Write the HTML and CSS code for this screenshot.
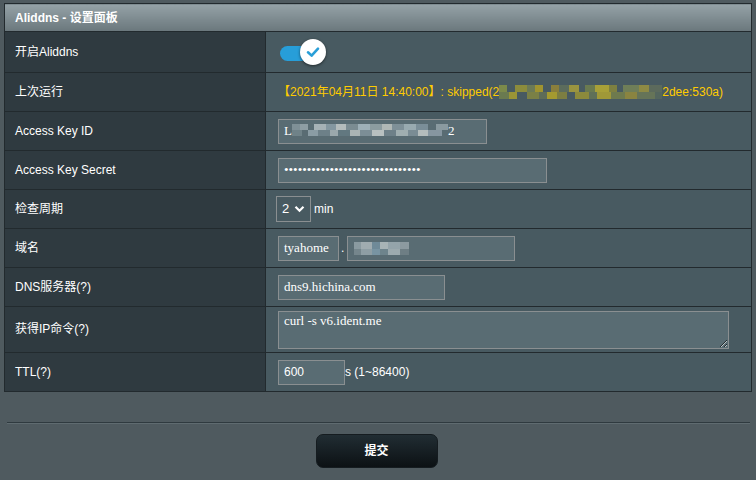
FILE: index.html
```html
<!DOCTYPE html>
<html>
<head>
<meta charset="utf-8">
<link rel="stylesheet" href="styles.css">
</head>
<body>
<div class="page">
  <table class="panel">
    <thead>
      <tr><th colspan="2" class="head">Aliddns - 设置面板</th></tr>
    </thead>
    <tbody>
      <tr class="r-first">
        <th>开启Aliddns</th>
        <td>
          <div class="toggle">
            <span class="track"></span>
            <span class="knob">
              <svg width="16" height="16" viewBox="0 0 16 16"><path d="M3 8.3 L6.6 11.6 L13 4.6" fill="none" stroke="#2a9fd8" stroke-width="2.6" stroke-linecap="round" stroke-linejoin="round"/></svg>
            </span>
          </div>
        </td>
      </tr>
      <tr>
        <th>上次运行</th>
        <td class="status">【2021年04月11日 14:40:00】: skipped(2<span class="mosaic mosaic-status"></span>2dee:530a)</td>
      </tr>
      <tr>
        <th>Access Key ID</th>
        <td><div class="field w-id">L<span class="mosaic mosaic-id"></span>2</div></td>
      </tr>
      <tr>
        <th>Access Key Secret</th>
        <td><input class="field w-secret" type="password" value="123456789012345678901234567890"></td>
      </tr>
      <tr>
        <th>检查周期</th>
        <td><div class="inline"><div class="select">2<svg width="11" height="8" viewBox="0 0 11 8"><path d="M1.5 1.8 L5.5 5.8 L9.5 1.8" fill="none" stroke="#fff" stroke-width="2.2"/></svg></div><span class="unit">min</span></div></td>
      </tr>
      <tr>
        <th>域名</th>
        <td><div class="inline"><div class="field w-sub">tyahome</div><span class="dot">.</span><div class="field w-dom"><span class="mosaic mosaic-dom"></span></div></div></td>
      </tr>
      <tr>
        <th>DNS服务器(?)</th>
        <td><div class="field w-dns">dns9.hichina.com</div></td>
      </tr>
      <tr class="r-tall">
        <th>获得IP命令(?)</th>
        <td><textarea class="area">curl -s v6.ident.me</textarea></td>
      </tr>
      <tr>
        <th>TTL(?)</th>
        <td><div class="inline"><div class="field w-ttl sans">600</div><span class="unit tight">s (1~86400)</span></div></td>
      </tr>
    </tbody>
  </table>
  <div class="divider"></div>
  <div class="actions"><button class="submit">提交</button></div>
</div>
</body>
</html>
```
FILE: styles.css
```css
html, body {
  margin: 0;
  padding: 0;
  background: #4f5a5f;
  font-family: "Liberation Sans", Arial, "Noto Sans CJK SC", sans-serif;
  font-size: 12px;
  line-height: 14px;
  color: #fff;
}
.page {
  padding: 3px 4px 0 4px;
}
.panel {
  width: 748px;
  border-collapse: collapse;
  border: 1px solid #222a2e;
}
.panel th, .panel td {
  border: 1px solid #222a2e;
  padding: 0;
  text-align: left;
  font-weight: normal;
}
.panel th.head {
  height: 27px;
  padding-left: 10px;
  font-weight: bold;
  background: linear-gradient(#95a2a7, #6a777c);
}
.panel tbody th {
  width: 250px;
  padding-left: 10px;
  padding-bottom: 1px;
  background: #2f3a40;
  height: 37px;
}
.panel tbody td {
  background: #485a61;
  padding-left: 12px;
  height: 38px;
}
.panel tr.r-first th { height: 39px; }
.panel tr.r-first td { height: 40px; }
.panel tr.r-tall th { height: 44px; }
.panel tr.r-tall td { height: 45px; }

.toggle {
  position: relative;
  width: 48px;
  height: 28px;
  margin-top: 1px;
}
.track {
  position: absolute;
  left: 2px;
  top: 7px;
  width: 34px;
  height: 15px;
  border-radius: 8px;
  background: #279ed9;
}
.knob {
  position: absolute;
  left: 22px;
  top: 0;
  width: 26px;
  height: 26px;
  border-radius: 50%;
  background: #fff;
  box-shadow: 0 1px 3px rgba(0,0,0,0.55);
  display: flex;
  align-items: center;
  justify-content: center;
}
.status {
  color: #ffcc00;
}
.mosaic {
  display: inline-block;
  vertical-align: middle;
}
.mosaic-status {
  width: 163px;
  height: 14px;
  margin-top: -2px;
  background:
    linear-gradient(90deg, #7c8a4a 0 8px, transparent 8px 16px, #8c8c3c 16px 28px, #6c7a56 28px 36px, #a09430 36px 44px, transparent 44px 52px, #8a7f3c 52px 60px, #5c6c5c 60px 70px, #9a9440 70px 80px, transparent 80px 86px, #6a7a50 86px 96px, #a8a038 96px 110px, #7e8040 110px 118px, transparent 118px 124px, #6f7e58 124px 140px, #8e8a44 140px 150px, #5c6a5c 150px 163px) top / 100% 7px no-repeat,
    linear-gradient(90deg, #6a7a50 0 10px, #9a9436 10px 18px, transparent 18px 28px, #7a8046 28px 40px, #5e6c58 40px 48px, #a49a30 48px 58px, #7c7e42 58px 68px, transparent 68px 76px, #8c8a3c 76px 90px, #607058 90px 98px, #a09838 98px 112px, #6e7a4e 112px 126px, #8a8440 126px 138px, #667458 138px 156px, #54665e 156px 163px) bottom / 100% 7px no-repeat;
}
.mosaic-id {
  width: 156px;
  height: 12px;
  margin-top: -2px;
  background:
    linear-gradient(90deg, #7f9096 0 8px, #8e9ea4 8px 16px, transparent 16px 22px, #a6b2b6 22px 34px, #8497a0 34px 44px, #b4bcbc 44px 54px, #7b8c92 54px 66px, #9eb0b8 66px 78px, #8c9ca0 78px 90px, #b0b8b6 90px 100px, #7e9098 100px 112px, #98aab0 112px 124px, #7a8e98 124px 136px, transparent 136px 144px, #8a9aa0 144px 156px) top / 100% 6px no-repeat,
    linear-gradient(90deg, #6f8288 0 10px, transparent 10px 16px, #8a9ca4 16px 26px, #6d8088 26px 38px, #9aa8ac 38px 46px, #627880 46px 58px, #aab4b4 58px 68px, #7c8e96 68px 80px, #b8c0c0 80px 92px, #6e8088 92px 104px, #a0aeb0 104px 116px, #7a8c94 116px 126px, #b4bcbc 126px 136px, #8696a0 136px 150px, transparent 150px 156px) bottom / 100% 6px no-repeat;
}
.mosaic-dom {
  width: 55px;
  height: 13px;
  background:
    linear-gradient(90deg, #8a9aa0 0 7px, #a0acb0 7px 18px, #6f8a98 18px 26px, #a8b4b6 26px 34px, #94a4aa 34px 46px, #8c9aa0 46px 55px) top / 100% 7px no-repeat,
    linear-gradient(90deg, #75868c 0 7px, #8e9ea4 7px 18px, #7894a2 18px 26px, #6e848c 26px 34px, #9caaae 34px 46px, #6e7e84 46px 55px) bottom / 100% 6px no-repeat;
}

.field {
  box-sizing: border-box;
  height: 25px;
  background: #596c73;
  border: 1px solid #8a8f91;
  color: #fff;
  font-family: "Liberation Serif", "Times New Roman", serif;
  font-size: 13px;
  padding: 0 0 0 5px;
  display: flex;
  align-items: center;
  margin: 0;
  outline: none;
}
input.field {
  display: block;
  letter-spacing: 0;
}
.field.sans {
  font-family: "Liberation Sans", Arial, sans-serif;
  font-size: 12px;
}
.w-id { width: 209px; }
.w-secret { width: 269px; }
.w-sub { width: 61px; }
.w-dom { width: 168px; padding-left: 6px; }
.w-dns { width: 167px; }
.w-ttl { width: 67px; }
.inline {
  display: flex;
  align-items: center;
}
.select {
  box-sizing: border-box;
  width: 35px;
  height: 26px;
  margin-left: -2px;
  border: 1px solid #8a8f91;
  display: flex;
  align-items: center;
  justify-content: space-between;
  padding: 0 5px 0 5px;
  font-size: 13px;
}
.unit {
  margin-left: 3px;
}
.unit.tight {
  margin-left: 0;
}
.dot {
  width: 8px;
  padding-left: 2px;
  box-sizing: border-box;
}
.area {
  box-sizing: border-box;
  display: block;
  width: 451px;
  height: 38px;
  margin: 1px 0 0 0;
  background: #596c73;
  border: 1px solid #8a8f91;
  color: #fff;
  font-family: "Liberation Serif", "Times New Roman", serif;
  font-size: 13px;
  line-height: normal;
  padding: 1px 5px;
  outline: none;
  resize: both;
}
.divider {
  margin: 30px 2px 0 3px;
  height: 1px;
  background: #2f3a3f;
  border-bottom: 1px solid #5f6b70;
}
.actions {
  display: flex;
  justify-content: center;
  padding-top: 10px;
  padding-right: 3px;
}
.submit {
  width: 122px;
  height: 34px;
  border: 1px solid #151c20;
  border-radius: 7px;
  background: linear-gradient(#212d33, #0c1114);
  color: #fff;
  font-family: "Liberation Sans", Arial, "Noto Sans CJK SC", sans-serif;
  font-size: 12px;
  line-height: 14px;
  font-weight: bold;
  padding: 0;
}
```
